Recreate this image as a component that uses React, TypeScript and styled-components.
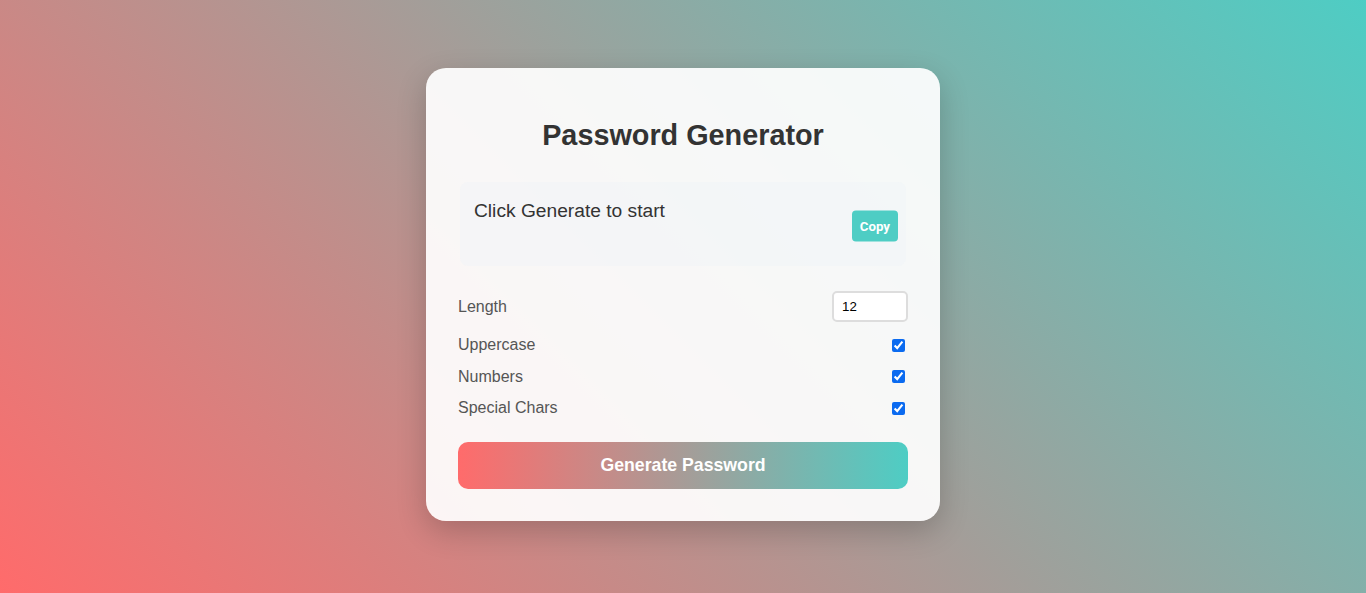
import React, { useState } from 'react';
import styled, { createGlobalStyle } from 'styled-components';

const GlobalStyle = createGlobalStyle`
  * {
    box-sizing: border-box;
  }
  html, body {
    margin: 0;
    padding: 0;
  }
  body {
    font-family: "Liberation Sans", Arial, sans-serif;
    background: linear-gradient(45deg, #ff6b6b, #4ecdc4);
    min-height: 100vh;
  }
`;

const Page = styled.div`
  min-height: 100vh;
  display: flex;
  align-items: center;
  justify-content: center;
  padding-bottom: 4px;
`;

const Card = styled.div`
  width: 514px;
  padding: 32px;
  background: rgba(255, 255, 255, 0.92);
  border-radius: 20px;
  box-shadow: 0 10px 30px rgba(0, 0, 0, 0.2);
`;

const Title = styled.h1`
  margin: 19px 0 30px;
  text-align: center;
  font-size: 28.8px;
  font-weight: 700;
  color: #333;
`;

const Display = styled.div`
  position: relative;
  margin: 0 2px 25px;
  padding: 18px 14px 14px;
  min-height: 84px;
  background: rgba(236, 241, 247, 0.3);
  border-radius: 8px;
  font-size: 19.2px;
  color: #333;
`;

const CopyBtn = styled.button`
  position: absolute;
  right: 8px;
  top: 50%;
  transform: translateY(-50%);
  margin-top: 2px;
  padding: 8px 8px;
  border: none;
  border-radius: 4px;
  background: #4ecdc4;
  color: #fff;
  font-family: Roboto, "Liberation Sans", sans-serif;
  font-size: 13.3px;
  font-weight: 700;
  cursor: pointer;
`;

const Options = styled.div`
  display: flex;
  flex-direction: column;
  gap: 12.5px;
  margin-bottom: 24px;
`;

const OptionRow = styled.label<{ $first?: boolean }>`
  display: flex;
  align-items: center;
  justify-content: space-between;
  padding-bottom: ${({ $first }) => ($first ? '1px' : '0')};
  font-size: 16px;
  color: #555;
`;

const LengthInput = styled.input`
  width: 76px;
  height: 31px;
  padding: 4px 8px;
  border: 2px solid #ddd;
  border-radius: 5px;
  background: #fff;
  font-family: "Liberation Sans", Arial, sans-serif;
  font-size: 13.3px;
  color: #000;
`;

const Check = styled.input`
  width: 13px;
  height: 13px;
  margin: 3px 3px 3px 4px;
  accent-color: #0b6bf0;
`;

const GenerateBtn = styled.button`
  width: 100%;
  height: 47px;
  border: none;
  border-radius: 10px;
  background: linear-gradient(90deg, #ff6b6b, #4ecdc4);
  color: #fff;
  font-family: "Liberation Sans", Arial, sans-serif;
  font-size: 17.7px;
  font-weight: 700;
  cursor: pointer;
`;

export default function App() {
  const [length, setLength] = useState('12');
  const [opts, setOpts] = useState({ upper: true, numbers: true, special: true });

  return (
    <>
      <GlobalStyle />
      <Page>
        <Card>
          <Title>Password Generator</Title>
          <Display>
            Click Generate to start
            <CopyBtn>Copy</CopyBtn>
          </Display>
          <Options>
            <OptionRow $first>
              Length
              <LengthInput
                type="number"
                value={length}
                onChange={(e) => setLength(e.target.value)}
              />
            </OptionRow>
            <OptionRow>
              Uppercase
              <Check
                type="checkbox"
                checked={opts.upper}
                onChange={() => setOpts({ ...opts, upper: !opts.upper })}
              />
            </OptionRow>
            <OptionRow>
              Numbers
              <Check
                type="checkbox"
                checked={opts.numbers}
                onChange={() => setOpts({ ...opts, numbers: !opts.numbers })}
              />
            </OptionRow>
            <OptionRow>
              Special Chars
              <Check
                type="checkbox"
                checked={opts.special}
                onChange={() => setOpts({ ...opts, special: !opts.special })}
              />
            </OptionRow>
          </Options>
          <GenerateBtn>Generate Password</GenerateBtn>
        </Card>
      </Page>
    </>
  );
}
